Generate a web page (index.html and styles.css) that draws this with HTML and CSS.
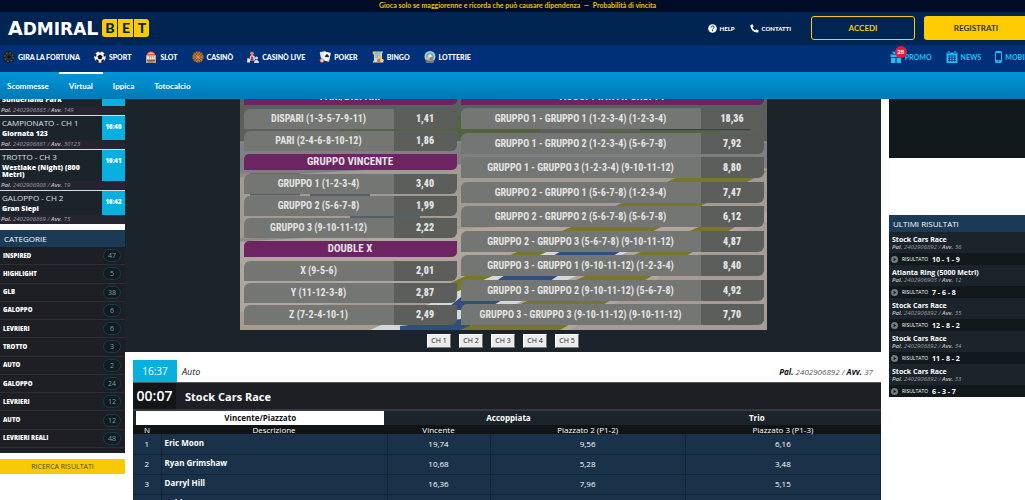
FILE: index.html
```html
<!DOCTYPE html>
<html lang="it">
<head>
<meta charset="utf-8">
<title>AdmiralBet - Virtual</title>
<link rel="stylesheet" href="styles.css">
</head>
<body>
<header class="site-header">
  <p class="notice">Gioca solo se maggiorenne e ricorda che può causare dipendenza &nbsp;—&nbsp; Probabilità di vincita</p>
  <div class="brand-bar">
    <a class="logo" href="#" aria-label="AdmiralBet">
      <span class="logo-name"><span class="cap">A</span>DMIRA<span class="cap">L</span></span>
      <span class="logo-tiles"><span>B</span><span>E</span><span>T</span></span>
    </a>
    <nav class="account">
      <a class="help" href="#">
        <svg class="i9" viewBox="0 0 18 18"><circle cx="9" cy="9" r="8.600" fill="#fff"/><path d="M6.200 7c0-4 6-3.800 6-.4 0 2-3 2-3 4.200M9.200 12v2.400" fill="none" stroke="#002552" stroke-width="2"/></svg>
        HELP</a>
      <a class="contact" href="#">
        <svg class="i9" viewBox="0 0 18 18"><path d="M1 2l4-1.500 2.200 4.600L5 7.200c1 2.500 3 4.500 5.600 5.700l2.200-2.300 4.600 2.200-1.300 4.200C8 18 0 10 1 2z" fill="#fff"/></svg>
        CONTATTI</a>
      <button class="btn btn-outline" type="button">ACCEDI</button>
      <button class="btn btn-solid" type="button">REGISTRATI</button>
    </nav>
  </div>
  <nav class="main-nav">
    <a href="#"><svg class="i12" viewBox="0 0 24 24"><circle cx="12" cy="12" r="12" fill="#171d26"/><circle cx="12" cy="12" r="8.500" fill="none" stroke="#4a4f50" stroke-width="3" stroke-dasharray="4 2.600"/><path d="M12 4v16M4 12h16M6.500 6.500l11 11M17.500 6.500l-11 11" stroke="#33484c" stroke-width="1.500"/><circle cx="12" cy="12" r="3" fill="#0c1118"/></svg>GIRA LA FORTUNA</a>
    <a href="#"><svg class="i12" viewBox="0 0 24 24"><circle cx="12" cy="12" r="11.500" fill="#f4f6f8"/><path d="M12 7l5 3.600-2 6H9l-2-6zM8 1l4 2.500L16 1c-2-1-6-1-8 0zM.6 10l3.600 1.500L5 6.500 3.500 5C1.500 6.500.5 8 .6 10zM23.400 10l-3.600 1.500-.8-5L20.500 5c2 1.500 3 3 2.900 5zM4 20l1-4 4.500 3.500L9 23c-2 0-4-1.500-5-3zM20 20l-1-4-4.500 3.500.5 3.500c2 0 4-1.500 5-3z" fill="#10151f"/></svg>SPORT</a>
    <a href="#"><svg class="i12" viewBox="0 0 24 24"><path d="M3 9C4-2 20-2 21 9z" fill="#e05a35"/><path d="M6 6c2-4 10-4 12 0z" fill="#f7c3a0"/><rect x="2" y="8" width="20" height="16" rx="1" fill="#c5a485"/><rect x="4" y="10" width="16" height="6" fill="#f2e6cf"/><path d="M7 11h2v4M11 11h2v4M15 11h2v4" stroke="#7b5d58" fill="none"/><path d="M4 19h16M7 22h10" stroke="#6f625e" stroke-width="2"/></svg>SLOT</a>
    <a href="#"><svg class="i12" viewBox="0 0 24 24"><circle cx="12" cy="12" r="11.500" fill="#3b4b4b"/><circle cx="12" cy="12" r="8.500" fill="none" stroke="#c76d32" stroke-width="5" stroke-dasharray="3.200 1.200"/><circle cx="12" cy="12" r="6" fill="#925134"/><path d="M12 5v14M5 12h14M7 7l10 10M17 7L7 17" stroke="#e79a4b" stroke-width="1.500"/></svg>CASINÒ</a>
    <a href="#"><svg class="i12" viewBox="0 0 24 24"><circle cx="10" cy="4.500" r="3.500" fill="#d89a7d"/><path d="M7 2c1-3 6-3 7 1z" fill="#65382e"/><path d="M5 19l1-9 4-2 5 2 1 9z" fill="#e9e8ee"/><path d="M8 9l2 4 2-4 1 10H7z" fill="#b03646"/><path d="M1 14l5 2v7H0z" fill="#e8edf6"/><circle cx="19" cy="14" r="3" fill="#f0d9cf"/><path d="M14 24c0-8 10-8 10 0z" fill="#d6dce8"/></svg>CASINÒ LIVE</a>
    <a href="#"><svg class="i12" viewBox="0 0 24 24"><rect x="3" y="1" width="12" height="17" rx="1.500" fill="#dce6f2" transform="rotate(-12 9 10)"/><rect x="9" y="2" width="13" height="18" rx="1.500" fill="#fff" transform="rotate(12 15 11)"/><path d="M16 6c4 3 5 5 3 7l-3-1-3 .5c-2-2-1-4 3-6.500z" fill="#17233f"/><circle cx="6" cy="19" r="4" fill="#eac4c4" stroke="#d44652" stroke-width="2" stroke-dasharray="3 2"/></svg>POKER</a>
    <a href="#"><svg class="i12" viewBox="0 0 24 24"><path d="M2 1h20l-2 5v13l3 4H1l3-5V6z" fill="#c4dbd9"/><path d="M5 4h13M6 8h10M6 12h7" stroke="#729fa8" stroke-width="2"/><circle cx="4" cy="4" r="3" fill="#e8b55a"/><circle cx="17" cy="12" r="3.500" fill="#edc25a"/><circle cx="14" cy="19" r="4" fill="#e86b3e"/><circle cx="20" cy="19" r="3.500" fill="#f1d2a2"/></svg>BINGO</a>
    <a href="#"><svg class="i12" viewBox="0 0 24 24"><circle cx="12" cy="11" r="11" fill="#a6cbd1"/><circle cx="12" cy="11" r="7.500" fill="#6eabb9"/><circle cx="12" cy="10" r="3.500" fill="#e7eef0"/><circle cx="8" cy="14" r="3" fill="#e8c064"/><circle cx="15" cy="15" r="3" fill="#ce5d43"/><path d="M2 17l7 2h6l7-2-3 7H5z" fill="#617b82"/></svg>LOTTERIE</a>
    <div class="extras">
      <a class="promo" href="#"><svg class="i12" viewBox="0 0 24 24"><path d="M1 7h22v5H1zM2 13.500h9V24H2zM13 13.500h9V24h-9zM11 6C6 6 3 3 6 1c3-1 5 2 5 5zM13 6c5 0 8-3 5-5-3-1-5 2-5 5z" fill="#25baf0"/></svg><span class="badge">28</span>PROMO</a>
      <a href="#"><svg class="i12" viewBox="0 0 24 24"><path d="M1 3h22v21H1z" fill="#25baf0"/><path d="M4 10h16M4 14.500h16M4 19h16M7 9v12M12 9v12M17 9v12" stroke="#003178" stroke-width="1.500"/><path d="M6 0v6M18 0v6" stroke="#003178" stroke-width="5"/><path d="M6 0v6M18 0v6" stroke="#25baf0" stroke-width="2.500"/></svg>NEWS</a>
      <a class="mobile" href="#"><svg class="phone" viewBox="0 0 14 24"><rect x="1" y="1" width="12" height="22" rx="2" fill="none" stroke="#25baf0" stroke-width="2"/><path d="M1 18h12v5H1zM1 1h12v3H1z" fill="#25baf0"/><circle cx="7" cy="20.500" r="1.300" fill="#003178"/></svg>MOBILE</a>
    </div>
  </nav>
  <nav class="sub-nav">
    <a href="#">Scommesse</a><a class="active" href="#">Virtual</a><a href="#">Ippica</a><a href="#">Totocalcio</a>
  </nav>
</header>

<div class="page">
  <aside class="left">
    <ul class="events">
      <li class="scrolled"><div class="ev"><div class="ev-name"><b>Sunderland Park</b></div><time></time></div><p class="ref"><b>Pal.</b> 2402906863 / <b>Avv.</b> 149</p></li>
      <li><div class="ev"><div class="ev-name"><span>CAMPIONATO - CH 1</span><b>Giornata 123</b></div><time>16:40</time></div><p class="ref"><b>Pal.</b> 2402906881 / <b>Avv.</b> 30123</p></li>
      <li><div class="ev"><div class="ev-name"><span>TROTTO - CH 3</span><b>Westlake (Night) (800 Metri)</b></div><time>16:41</time></div><p class="ref"><b>Pal.</b> 2402906908 / <b>Avv.</b> 19</p></li>
      <li><div class="ev"><div class="ev-name"><span>GALOPPO - CH 2</span><b>Gran Siepi</b></div><time>16:42</time></div><p class="ref"><b>Pal.</b> 2402906869 / <b>Avv.</b> 75</p></li>
    </ul>
    <section class="cats">
      <h2 class="side-title">CATEGORIE</h2>
      <ul class="cat-list">
        <li>INSPIRED<span>47</span></li><li>HIGHLIGHT<span>5</span></li><li>GLB<span>38</span></li><li>GALOPPO<span>6</span></li><li>LEVRIERI<span>6</span></li><li>TROTTO<span>3</span></li><li>AUTO<span>2</span></li><li>GALOPPO<span>24</span></li><li>LEVRIERI<span>12</span></li><li>AUTO<span>12</span></li><li>LEVRIERI REALI<span>48</span></li>
      </ul>
    </section>
    <button class="search" type="button">RICERCA RISULTATI</button>
  </aside>

  <main class="center">
    <section class="stage">
      <div class="video">
        <svg class="scene" viewBox="0 0 527 248" preserveAspectRatio="none">
          <rect width="527" height="248" fill="#8f8984"/>
          <path d="M0 0h527v60H0z" fill="#5c605d"/>
          <path d="M30 16h170v6H30zM250 16h60v8h-60zM400 44h110v5H400z" fill="#3a453c"/>
          <path d="M100 34h200v22H100zM360 50h120v20H360z" fill="#51643f"/>
          <path d="M0 62h527v30H0z" fill="#7f7f83"/>
          <path d="M0 96l240-14 287 5v50l-527 20z" fill="#a39a91"/>
          <path d="M10 92h50v22H10zM70 110h60v6H70zM110 130h70v28h-70z" fill="#53606d"/>
          <path d="M200 155h60v5h-60z" fill="#c3932e"/>
          <path d="M0 160l527-30v118H0z" fill="#b1a69d"/>
          <path d="M20 182h90v8H20z" fill="#4d5560"/>
          <path d="M527 90L225 248H110L450 90z" fill="#77762b"/>
          <path d="M0 230l230-20v38H0z" fill="#a89c8e"/>
          <path d="M330 160h80L220 248H130z" fill="#d4d8da"/>
          <path d="M340 158h60l-30 18h-60zM285 180h54l-30 20h-54zM230 208h50l-35 20h-40zM160 244l70-8v12h-70z" fill="#314f7e"/>
          <path d="M460 145h36L320 248H220z" fill="#77762b"/>
          <path d="M480 160l47-20v108H330z" fill="#a69b95"/>
        </svg>
        <div class="odds odds-a">
          <h3>PARI/DISPARI</h3>
          <p><span>DISPARI (1-3-5-7-9-11)</span><b>1,41</b></p>
          <p><span>PARI (2-4-6-8-10-12)</span><b>1,86</b></p>
          <h3>GRUPPO VINCENTE</h3>
          <p><span>GRUPPO 1 (1-2-3-4)</span><b>3,40</b></p>
          <p><span>GRUPPO 2 (5-6-7-8)</span><b>1,99</b></p>
          <p><span>GRUPPO 3 (9-10-11-12)</span><b>2,22</b></p>
          <h3>DOUBLE X</h3>
          <p><span>X (9-5-6)</span><b>2,01</b></p>
          <p><span>Y (11-12-3-8)</span><b>2,87</b></p>
          <p><span>Z (7-2-4-10-1)</span><b>2,49</b></p>
        </div>
        <div class="odds odds-b">
          <h3>ACCOPPIATA X GRUPPI</h3>
          <p><span>GRUPPO 1 - GRUPPO 1 (1-2-3-4) (1-2-3-4)</span><b>18,36</b></p>
          <p><span>GRUPPO 1 - GRUPPO 2 (1-2-3-4) (5-6-7-8)</span><b>7,92</b></p>
          <p><span>GRUPPO 1 - GRUPPO 3 (1-2-3-4) (9-10-11-12)</span><b>8,80</b></p>
          <p><span>GRUPPO 2 - GRUPPO 1 (5-6-7-8) (1-2-3-4)</span><b>7,47</b></p>
          <p><span>GRUPPO 2 - GRUPPO 2 (5-6-7-8) (5-6-7-8)</span><b>6,12</b></p>
          <p><span>GRUPPO 2 - GRUPPO 3 (5-6-7-8) (9-10-11-12)</span><b>4,87</b></p>
          <p><span>GRUPPO 3 - GRUPPO 1 (9-10-11-12) (1-2-3-4)</span><b>8,40</b></p>
          <p><span>GRUPPO 3 - GRUPPO 2 (9-10-11-12) (5-6-7-8)</span><b>4,92</b></p>
          <p><span>GRUPPO 3 - GRUPPO 3 (9-10-11-12) (9-10-11-12)</span><b>7,70</b></p>
        </div>
      </div>
      <div class="channels">
        <button type="button">CH 1</button><button type="button">CH 2</button><button type="button">CH 3</button><button type="button">CH 4</button><button type="button">CH 5</button>
      </div>
    </section>

    <section class="race">
      <div class="race-meta"><time>16:37</time><em>Auto</em><p><b>Pal.</b> 2402906892 / <b>Avv.</b> 37</p></div>
      <div class="race-title"><span class="countdown">00:07</span><h1>Stock Cars Race</h1></div>
      <div class="tabs"><button class="on" type="button">Vincente/Piazzato</button><button type="button">Accoppiata</button><button type="button">Trio</button></div>
      <table class="runners">
        <thead><tr><th class="c-n">N</th><th class="c-name">Descrizione</th><th class="c-win">Vincente</th><th>Piazzato 2 (P1-2)</th><th>Piazzato 3 (P1-3)</th></tr></thead>
        <tbody>
          <tr><td>1</td><td class="name">Eric Moon</td><td>19,74</td><td>9,56</td><td>6,16</td></tr>
          <tr><td>2</td><td class="name">Ryan Grimshaw</td><td>10,68</td><td>5,28</td><td>3,48</td></tr>
          <tr><td>3</td><td class="name">Darryl Hill</td><td>16,36</td><td>7,96</td><td>5,15</td></tr>
          <tr><td></td><td class="name">Bobby Spencer</td><td></td><td></td><td></td></tr>
        </tbody>
      </table>
    </section>
  </main>

  <aside class="right">
    <div class="slip"></div>
    <h2 class="side-title">ULTIMI RISULTATI</h2>
    <ul class="results">
      <li><b>Stock Cars Race</b><p class="ref"><b>Pal.</b> 2402906892 / <b>Avv.</b> 36</p><div class="res"><svg viewBox="0 0 16 16"><circle cx="8" cy="8" r="8" fill="#777c7e"/><path d="M6 4l6 4-6 4z" fill="#11191d"/></svg>RISULTATO <b>10 - 1 - 9</b></div></li>
      <li><b>Atlanta Ring (5000 Metri)</b><p class="ref"><b>Pal.</b> 2402906903 / <b>Avv.</b> 12</p><div class="res"><svg viewBox="0 0 16 16"><circle cx="8" cy="8" r="8" fill="#777c7e"/><path d="M6 4l6 4-6 4z" fill="#11191d"/></svg>RISULTATO <b>7 - 6 - 8</b></div></li>
      <li><b>Stock Cars Race</b><p class="ref"><b>Pal.</b> 2402906892 / <b>Avv.</b> 35</p><div class="res"><svg viewBox="0 0 16 16"><circle cx="8" cy="8" r="8" fill="#777c7e"/><path d="M6 4l6 4-6 4z" fill="#11191d"/></svg>RISULTATO <b>12 - 8 - 2</b></div></li>
      <li><b>Stock Cars Race</b><p class="ref"><b>Pal.</b> 2402906892 / <b>Avv.</b> 34</p><div class="res"><svg viewBox="0 0 16 16"><circle cx="8" cy="8" r="8" fill="#777c7e"/><path d="M6 4l6 4-6 4z" fill="#11191d"/></svg>RISULTATO <b>11 - 8 - 2</b></div></li>
      <li><b>Stock Cars Race</b><p class="ref"><b>Pal.</b> 2402906892 / <b>Avv.</b> 33</p><div class="res"><svg viewBox="0 0 16 16"><circle cx="8" cy="8" r="8" fill="#777c7e"/><path d="M6 4l6 4-6 4z" fill="#11191d"/></svg>RISULTATO <b>6 - 3 - 7</b></div></li>
    </ul>
  </aside>
</div>
</body>
</html>
```

FILE: styles.css
```css
* { box-sizing: border-box; }
html, body { height: 100%; overflow: hidden; }
body { margin: 0; background: #fff; color: #fff; font-family: "Open Sans", "Noto Sans", sans-serif; font-size: 8px; }
p, h1, h2, h3, ul { margin: 0; padding: 0; }
ul { list-style: none; }
a { color: inherit; text-decoration: none; }
button { font: inherit; margin: 0; padding: 0; border: 0; cursor: pointer; }

/* Header */
.site-header { position: relative; z-index: 2; font-family: Lato, sans-serif; font-weight: 700; }
.notice { height: 12px; line-height: 10px; padding-left: 10px; font-size: 7px; font-weight: 700; text-align: center; background: #000c26; color: #e6c400; }
.brand-bar { height: 33px; padding: 0 0 1px 8px; display: flex; align-items: center; justify-content: space-between; background: #002552; }
.logo { display: flex; align-items: center; gap: 4px; }
.logo-name { font-family: "DejaVu Sans", sans-serif; font-weight: 700; font-size: 17px; line-height: 18px; }
.logo-name .cap { font-size: 19px; }
.logo-tiles { display: flex; gap: 1px; border-radius: 3px; overflow: hidden; }
.logo-tiles span { width: 15px; height: 18px; line-height: 18px; text-align: center; font-size: 14px; font-weight: 900; color: #002552; background: #fecb00; }
.account { display: flex; align-items: center; margin-right: -3px; }
.account a { display: flex; align-items: center; gap: 3px; font-size: 6px; font-weight: 900; }
.help { margin-right: 15px; }
.contact { margin-right: 20px; }
.i9 { width: 9px; height: 9px; }
.btn { width: 104px; height: 24px; border-radius: 3px; font-size: 8px; font-weight: 700; }
.btn-outline { background: none; border: 1px solid #fecb00; color: #fecb00; margin-right: 9px; }
.btn-solid { background: #fecb00; color: #2b3346; }

.main-nav { height: 27px; display: flex; align-items: center; gap: 14px; padding: 0 0 3px 3px; background: #003178; font-size: 7px; font-weight: 900; }
.main-nav a { display: flex; align-items: center; gap: 3px; white-space: nowrap; }
.i12 { width: 12px; height: 12px; }
.phone { width: 7px; height: 12px; }
.extras { display: flex; gap: 14px; margin-left: auto; margin-right: -7px; color: #25baf0; }
.promo { position: relative; }
.badge { position: absolute; left: 5px; top: -5px; width: 12px; height: 12px; line-height: 12px; border-radius: 50%; background: #e8193c; color: #fff; font-size: 6px; text-align: center; }

.sub-nav { height: 27px; display: flex; font-size: 8px; font-weight: 700; background: linear-gradient(#0096d9, #007ab3); }
.sub-nav a { padding: 0 10px; line-height: 24px; border-top: 2px solid transparent; }
.sub-nav a:first-child { padding-left: 7px; }
.sub-nav .active { border-top-color: #fff; }

/* Page columns, scrolled partly under the header */
.page { display: flex; align-items: flex-start; margin-top: -18px; }
.left { width: 125px; flex: none; }
.center { flex: 1; min-width: 0; }
.right { width: 136px; flex: none; margin-left: 8px; }

.events li { border-top: 1px solid #d9dcde; background: #262430; }
.ev { display: flex; background: #1c242b; }
.ev-name { flex: 1; padding: 2px 0 3px 2px; }
.scrolled .ev-name { padding-top: 12px; }
.ev-name span, .ev-name b { display: block; }
.ev-name span { font-size: 8px; line-height: 10px; color: #dfe2e4; }
.ev-name b { font-size: 7px; line-height: 7px; margin-top: 2px; font-weight: 800; width: 88px; }
.ev time { width: 23px; background: #08b0e0; font-size: 6px; font-weight: 800; line-height: 22px; text-align: center; }
.ref { font-size: 6px; line-height: 9px; padding-left: 1px; font-style: italic; color: #9a9da2; }
.ref b { color: #c4c7ca; font-weight: 600; }

.side-title { font-size: 8px; font-weight: 400; line-height: 17px; padding-left: 4px; background: #1a3a55; }
.cats { margin-top: 6px; padding-bottom: 5px; background: #1e1e25; }
.cat-list { display: grid; grid-auto-rows: 1fr; height: 201px; }
.cat-list li { display: flex; align-items: center; justify-content: space-between; padding: 0 4px 0 3px; font-size: 6px; font-weight: 800; border-bottom: 1px solid #2b2e34; }
.cat-list span { width: 18px; height: 13px; line-height: 11px; border: 1px solid #12414f; border-radius: 7px; background: #111b22; color: #8e969a; font-size: 7px; font-weight: 400; text-align: center; }
.search { display: block; width: 100%; margin-top: 6px; height: 15px; font-size: 7px; background: #f9c908; color: #4d4a20; }

/* Video stage */
.stage { background: #1c242b; padding-bottom: 4px; }
.video { position: relative; width: 527px; max-width: 100%; margin: 0 auto; display: flex; align-items: stretch; gap: 4px; padding: 8px 3px 5px 4px; overflow: hidden; }
.scene { position: absolute; inset: 0; width: 100%; height: 100%; }
.odds { position: relative; display: flex; flex-direction: column; font-family: "Liberation Sans Narrow", "Roboto Condensed", Roboto, sans-serif; font-size: 10px; font-weight: 700; color: #e4e4e4; }
.odds-a { width: 213px; gap: 2px; }
.odds-b { flex: 1; justify-content: space-between; }
.odds h3 { height: 16px; line-height: 16px; font-size: 11px; text-align: center; background: #6c2463; border-radius: 5px 0 5px 0; }
.odds-a h3 { margin: 1px 0 2px; }
.odds-a h3:first-child { margin-top: 0; }
.odds p { display: flex; height: 20px; line-height: 20px; border-radius: 6px 0 6px 0; overflow: hidden; text-align: center; }
.odds-b p { height: 21px; line-height: 21px; }
.odds span { flex: 1; background: #747673; white-space: nowrap; }
.odds b { width: 63px; background: #5c5e5c; }
.channels { display: flex; justify-content: center; gap: 8px; margin-top: 4px; }
.channels button { width: 24px; height: 14px; font-size: 7px; line-height: 10px; background: #ececec; color: #222; border: 1px solid; border-color: #fff #777 #777 #fff; }

/* Race card */
.race { margin: 8px 0 0 8px; background: #1c242b; }
.race-meta { display: flex; align-items: center; height: 22px; background: #fff; color: #111; font-size: 8px; }
.race-meta time { width: 44px; line-height: 22px; text-align: center; background: #08b0e0; color: #fff; font-size: 10px; }
.race-meta em { margin-left: 5px; font-size: 9px; font-weight: 500; }
.race-meta p { margin-left: auto; margin-right: 8px; font-style: italic; color: #555; }
.race-meta p b { color: #111; }
.race-title { display: flex; align-items: center; height: 27px; background: #1e1e25; border-top: 1px solid #55585c; }
.countdown { width: 43px; line-height: 26px; text-align: center; background: #131519; font-size: 14px; font-weight: 600; }
.race-title h1 { margin-left: 9px; font-size: 11px; font-weight: 700; }
.tabs { display: flex; padding-left: 3px; border-top: 2px solid #343a40; }
.tabs button { flex: 1; height: 14px; line-height: 14px; font-size: 8px; font-weight: 700; background: #1c242b; color: #fff; }
.tabs .on { background: #fff; color: #111; }
.runners { width: 100%; table-layout: fixed; border-collapse: collapse; text-align: center; font-size: 8px; }
.runners th { padding: 0; height: 9px; line-height: 9px; font-weight: 400; background: #101417; }
.runners td { padding: 0; height: 20px; line-height: 18px; background: #1a3249; border: 1px solid #142537; border-top: 0; border-left: 0; }
.c-n { width: 28px; }
.c-name { width: 226px; }
.c-win { width: 103px; }
.runners .name { text-align: left; padding-left: 3px; font-weight: 700; line-height: 16px; padding-bottom: 2px; }

/* Results */
.slip { height: 77px; background: #11191d; margin-bottom: 57px; }
.results li { background: #1c242b; padding-top: 3px; }
.results li > b { display: block; font-size: 7px; line-height: 9px; padding-left: 3px; }
.results .ref { padding-left: 3px; line-height: 7px; padding-bottom: 2px; }
.res { display: flex; align-items: center; gap: 4px; height: 12px; padding-left: 2px; background: #11191d; font-size: 5px; }
.res svg { width: 7px; height: 7px; }
.res b { font-size: 7px; }
```
